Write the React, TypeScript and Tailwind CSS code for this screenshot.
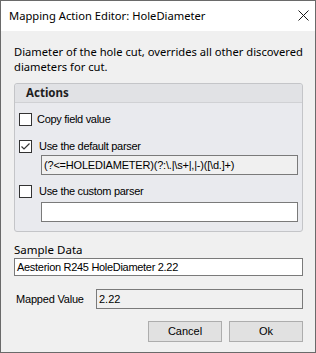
import React from 'react';

const ui = "font-['Segoe_UI','Noto_Sans',sans-serif]";
const ms = "font-['Liberation_Sans',Arial,sans-serif]";

const CheckBox: React.FC<{ checked?: boolean; label: string; gap: string }> = ({ checked, label, gap }) => (
  <div className="flex items-center h-[13px] ml-[4px]">
    <div className="w-[13px] h-[13px] border border-[#333333] bg-white flex items-center justify-center shrink-0">
      {checked && (
        <svg width="11" height="11" viewBox="0 0 11 11">
          <polyline points="1.5,5.5 4,8 9.5,2.5" fill="none" stroke="#333333" strokeWidth="1.2" />
        </svg>
      )}
    </div>
    <span className={`${ms} text-[11px] tracking-[-0.3px] text-black leading-none whitespace-nowrap ${gap}`}>{label}</span>
  </div>
);

const App: React.FC = () => {
  return (
    <div className="w-[316px] h-[353px] border border-[#6a6a6a] bg-[#f0f0f0] flex flex-col overflow-hidden">
      {/* title bar */}
      <div className="h-[30px] bg-white flex items-center justify-between shrink-0">
        <span className={`${ui} text-[11.2px] text-black ml-[8px] whitespace-nowrap`}>Mapping Action Editor: HoleDiameter</span>
        <svg width="11" height="11" viewBox="0 0 11 11" className="mr-[6px] mt-[-1px]">
          <path d="M0.5 0.5 L10.5 10.5 M10.5 0.5 L0.5 10.5" stroke="#1a1a1a" strokeWidth="1" />
        </svg>
      </div>

      <div className="flex flex-col pl-[13px] pr-[12px] pt-[13px]">
        <p className={`${ui} text-[11.2px] leading-[15px] text-black whitespace-nowrap`}>
          Diameter of the hole cut, overrides all other discovered
          <br />
          diameters for cut.
        </p>

        {/* Actions group */}
        <div className="mt-[9px] h-[149px] border border-[#c4c5c8] rounded-[3px] bg-[#e9eaee] flex flex-col">
          <div className="h-[19px] bg-[#e1e2e5] border-b border-[#d0d1d4] flex items-center rounded-t-[3px]">
            <span className={`${ui} text-[11.5px] font-bold text-[#1e1e1e] ml-[11px]`}>Actions</span>
          </div>

          <div className="mt-[10px]">
            <CheckBox label="Copy field value" gap="ml-[5px]" />
          </div>
          <div className="mt-[14px]">
            <CheckBox checked label="Use the default parser" gap="ml-[7px]" />
          </div>
          <div className={`${ms} mt-[2px] ml-[26px] w-[257px] h-[20px] border border-[#7a7a7a] bg-[#f0f0f0] text-[11px] tracking-[-0.2px] text-black flex items-center pl-[2px] whitespace-nowrap`}>
            {'(?<=HOLEDIAMETER)(?:\\.|\\s+|,|-)([\\d.]+)'}
          </div>
          <div className="mt-[10px]">
            <CheckBox label="Use the custom parser" gap="ml-[7px]" />
          </div>
          <div className="mt-[4px] ml-[26px] w-[257px] h-[20px] border border-[#7a7a7a] bg-white" />
        </div>

        <span className={`${ui} text-[11.5px] text-black leading-[15px] mt-[10px]`}>Sample Data</span>
        <div className={`${ms} mt-[1px] w-[289px] h-[18px] border border-[#7a7a7a] bg-white text-[11px] tracking-[-0.3px] text-black flex items-center pl-[2px]`}>
          Aesterion R245 HoleDiameter 2.22
        </div>

        <div className="flex items-center mt-[13px]">
          <span className={`${ms} text-[11px] tracking-[-0.2px] text-black ml-[2px] w-[80px]`}>Mapped Value</span>
          <div className={`${ms} w-[207px] h-[20px] border border-[#7a7a7a] bg-[#f0f0f0] text-[11px] text-black flex items-center pl-[2px]`}>
            2.22
          </div>
        </div>

        <div className="flex justify-end gap-[7px] mt-[12px]">
          <button className={`${ms} w-[74px] h-[21px] border border-[#adadad] bg-[#e1e1e1] text-[11px] text-black`}>Cancel</button>
          <button className={`${ms} w-[74px] h-[21px] border border-[#adadad] bg-[#e1e1e1] text-[11px] text-black`}>Ok</button>
        </div>
      </div>
    </div>
  );
};

export default App;
